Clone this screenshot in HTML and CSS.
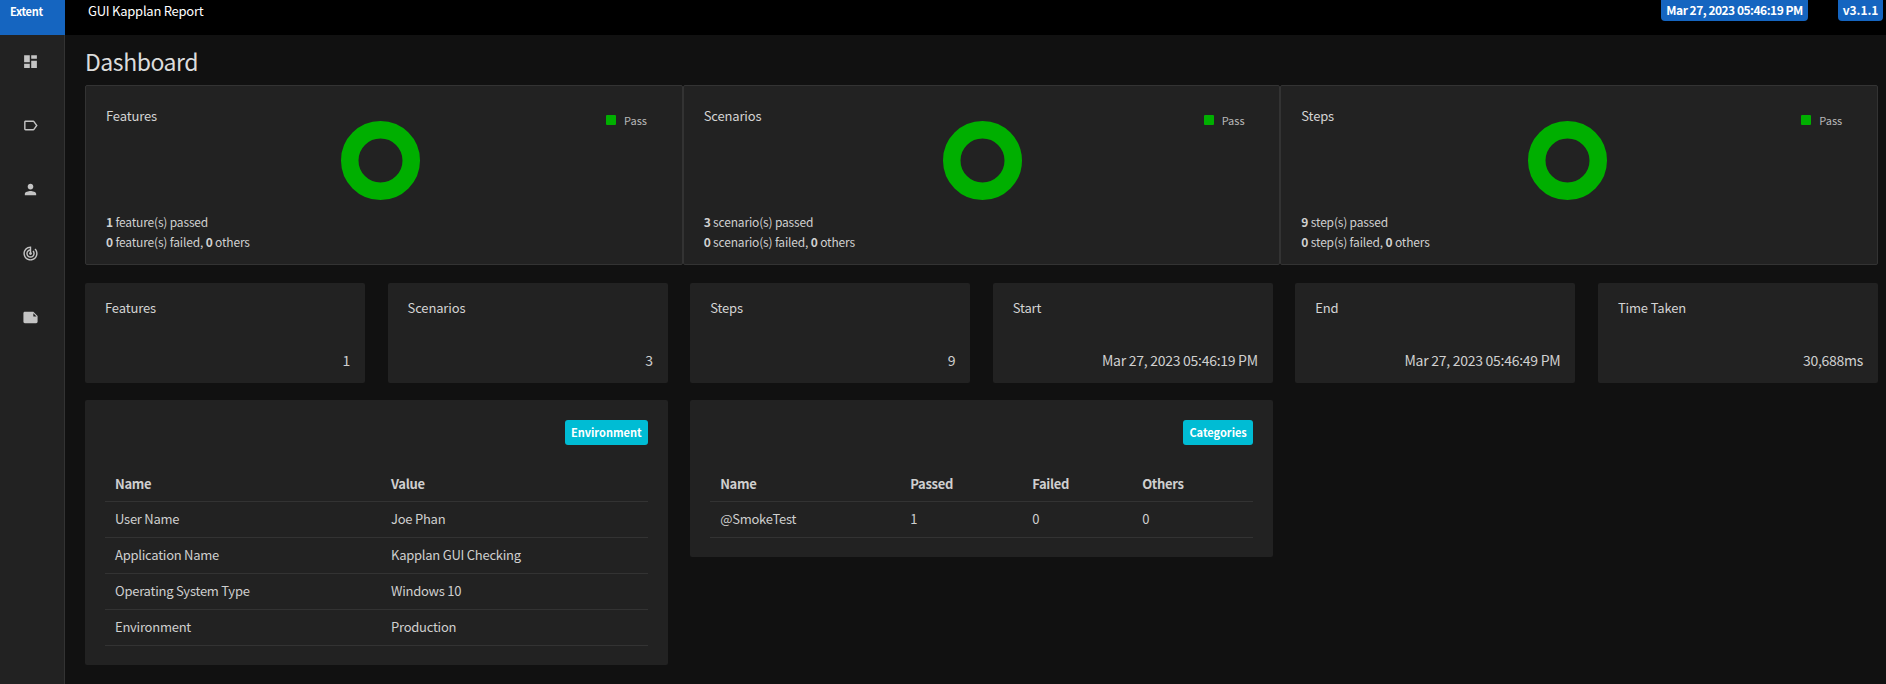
FILE: index.html
```html
<!DOCTYPE html>
<html lang="en">
<head>
<meta charset="utf-8">
<title>GUI Kapplan Report</title>
<link rel="stylesheet" href="styles.css">
</head>
<body>
<header class="navbar">
  <div class="logo">Extent</div>
  <div class="report-name">GUI Kapplan Report</div>
  <div class="nav-badge nav-date">Mar 27, 2023 05:46:19 PM</div>
  <div class="nav-badge nav-version">v3.1.1</div>
</header>
<div class="layout">
  <nav class="sidebar">
    <svg class="side-icon" viewBox="0 0 24 24"><path d="M3 13h8V3H3v10zm0 8h8v-6H3v6zm10 0h8V11h-8v10zm0-19v6h8V3h-8z"/></svg>
    <svg class="side-icon" viewBox="0 0 24 24"><path d="M17.63 5.84C17.27 5.33 16.67 5 16 5L5 5.01C3.9 5.01 3 5.9 3 7v10c0 1.1.9 1.99 2 1.99L16 19c.67 0 1.27-.33 1.63-.84L22 12l-4.37-6.16zM16 17H5V7h11l3.55 5L16 17z"/></svg>
    <svg class="side-icon" viewBox="0 0 24 24"><path d="M12 12c2.21 0 4-1.79 4-4s-1.79-4-4-4-4 1.79-4 4 1.79 4 4 4zm0 2c-2.67 0-8 1.34-8 4v2h16v-2c0-2.66-5.33-4-8-4z"/></svg>
    <svg class="side-icon" viewBox="0 0 24 24"><path d="M19.07 4.93l-1.41 1.41C19.1 7.79 20 9.79 20 12c0 4.42-3.58 8-8 8s-8-3.58-8-8c0-4.08 3.05-7.44 7-7.93v2.02C8.16 6.57 6 9.03 6 12c0 3.31 2.69 6 6 6s6-2.69 6-6c0-1.66-.67-3.16-1.76-4.24l-1.41 1.41C15.55 9.9 16 10.9 16 12c0 2.21-1.79 4-4 4s-4-1.79-4-4c0-1.86 1.28-3.41 3-3.86v2.14c-.6.35-1 .98-1 1.72 0 1.1.9 2 2 2s2-.9 2-2c0-.74-.4-1.38-1-1.72V2h-1C6.48 2 2 6.48 2 12s4.48 10 10 10 10-4.48 10-10c0-2.76-1.12-5.26-2.93-7.07z"/></svg>
    <svg class="side-icon" viewBox="0 0 24 24"><path d="M22 10l-6-6H4c-1.1 0-2 .9-2 2v12.01c0 1.1.9 1.99 2 1.99l16-.01c1.1 0 2-.89 2-1.99v-8zm-6-4l4.5 4.5H16V6z"/></svg>
  </nav>
  <main class="content">
    <h1 class="page-title">Dashboard</h1>
    <section class="charts">
      <article class="chart-card">
        <div class="chart-row">
          <h2 class="chart-title">Features</h2>
          <svg class="donut donut-a" viewBox="0 0 79 79"><circle cx="39.5" cy="39.5" r="30.75" /></svg>
          <div class="legend"><span class="legend-swatch"></span>Pass</div>
        </div>
        <p class="chart-note"><b>1</b> feature(s) passed</p>
        <p class="chart-note"><b>0</b> feature(s) failed, <b>0</b> others</p>
      </article>
      <article class="chart-card">
        <div class="chart-row">
          <h2 class="chart-title">Scenarios</h2>
          <svg class="donut donut-b" viewBox="0 0 79 79"><circle cx="39.5" cy="39.5" r="30.75" /></svg>
          <div class="legend"><span class="legend-swatch"></span>Pass</div>
        </div>
        <p class="chart-note"><b>3</b> scenario(s) passed</p>
        <p class="chart-note"><b>0</b> scenario(s) failed, <b>0</b> others</p>
      </article>
      <article class="chart-card">
        <div class="chart-row">
          <h2 class="chart-title">Steps</h2>
          <svg class="donut donut-c" viewBox="0 0 79 79"><circle cx="39.5" cy="39.5" r="30.75" /></svg>
          <div class="legend"><span class="legend-swatch"></span>Pass</div>
        </div>
        <p class="chart-note"><b>9</b> step(s) passed</p>
        <p class="chart-note"><b>0</b> step(s) failed, <b>0</b> others</p>
      </article>
    </section>
    <section class="grid">
      <article class="stat"><h3 class="stat-title">Features</h3><div class="stat-value">1</div></article>
      <article class="stat"><h3 class="stat-title">Scenarios</h3><div class="stat-value">3</div></article>
      <article class="stat"><h3 class="stat-title">Steps</h3><div class="stat-value">9</div></article>
      <article class="stat"><h3 class="stat-title">Start</h3><div class="stat-value">Mar 27, 2023 05:46:19 PM</div></article>
      <article class="stat"><h3 class="stat-title">End</h3><div class="stat-value">Mar 27, 2023 05:46:49 PM</div></article>
      <article class="stat"><h3 class="stat-title">Time Taken</h3><div class="stat-value">30,688ms</div></article>
      <article class="panel panel-env">
        <div class="panel-head"><span class="panel-badge">Environment</span></div>
        <table class="data-table env-table">
          <thead><tr><th class="env-name">Name</th><th>Value</th></tr></thead>
          <tbody>
            <tr><td>User Name</td><td>Joe Phan</td></tr>
            <tr><td>Application Name</td><td>Kapplan GUI Checking</td></tr>
            <tr><td>Operating System Type</td><td>Windows 10</td></tr>
            <tr><td>Environment</td><td>Production</td></tr>
          </tbody>
        </table>
      </article>
      <article class="panel panel-cat">
        <div class="panel-head"><span class="panel-badge">Categories</span></div>
        <table class="data-table cat-table">
          <thead><tr><th class="cat-name">Name</th><th class="cat-passed">Passed</th><th class="cat-failed">Failed</th><th>Others</th></tr></thead>
          <tbody>
            <tr><td>@SmokeTest</td><td>1</td><td>0</td><td>0</td></tr>
          </tbody>
        </table>
      </article>
    </section>
  </main>
</div>
</body>
</html>
```

FILE: styles.css
```css
* { box-sizing: border-box; }

html, body {
  margin: 0;
  height: 684px;
  overflow: hidden;
}

body {
  background: #111;
  color: #d0d0d0;
  font-family: "Noto Sans CJK JP", "Open Sans", sans-serif;
  font-size: 13px;
}

.navbar {
  display: flex;
  align-items: flex-start;
  height: 35px;
  background: #000;
}

.logo {
  width: 65px;
  height: 35px;
  background: #1565c0;
  color: #fff;
  font-size: 11px;
  font-weight: 700;
  letter-spacing: -0.3px;
  line-height: 22px;
  padding-left: 10px;
}

.report-name {
  flex: 1;
  margin-left: 23px;
  color: #fff;
  font-size: 13px;
  letter-spacing: -0.25px;
  line-height: 21px;
}

.nav-badge {
  height: 21px;
  background: #1565c0;
  color: #fff;
  font-size: 12px;
  font-weight: 700;
  letter-spacing: -0.5px;
  line-height: 20px;
  text-align: center;
  white-space: nowrap;
  border-radius: 0 0 4px 4px;
}

.nav-date { width: 147px; margin-right: 30px; }
.nav-version { width: 45px; margin-right: 3px; letter-spacing: -0.1px; }

.layout {
  display: flex;
  height: 649px;
}

.sidebar {
  display: flex;
  flex-direction: column;
  align-items: center;
  gap: 47px;
  width: 65px;
  padding: 18px 3px 0 0;
  background: #222;
  border-right: 1px solid #333;
}

.side-icon {
  width: 17px;
  height: 17px;
  flex: none;
  fill: #c4c4c4;
}

.content {
  flex: 1;
  min-width: 0;
  padding: 0 8px 0 20px;
}

.page-title {
  margin: 0;
  height: 50px;
  color: #dcdcdc;
  font-size: 23px;
  font-weight: 400;
  letter-spacing: -0.45px;
  line-height: 52px;
}

.charts {
  display: flex;
  height: 180px;
}

.chart-card {
  flex: 1 1 0;
  min-width: 0;
  padding: 20px 20px 0;
  background: #222;
  border: 1px solid #333;
  border-radius: 2px;
}

.chart-row {
  display: flex;
  align-items: flex-start;
  height: 106px;
}

.chart-title {
  width: 0;
  margin: 0;
  color: #d4d4d4;
  font-size: 13px;
  font-weight: 400;
  letter-spacing: -0.15px;
  line-height: 20px;
  white-space: nowrap;
}

.donut {
  flex: none;
  width: 79px;
  height: 79px;
  margin-top: 15px;
  fill: none;
  stroke: #00af00;
  stroke-width: 17.5;
}

.donut-a { margin-left: 235px; }
.donut-b { margin-left: 239px; }
.donut-c { margin-left: 227px; }

.legend {
  display: flex;
  flex: none;
  align-items: center;
  gap: 8px;
  margin-top: 4px;
  color: #b8b8b8;
  font-size: 11px;
  line-height: 20px;
}

.donut-a + .legend { margin-left: 186px; }
.donut-b + .legend { margin-left: 182px; }
.donut-c + .legend { margin-left: 194px; }

.legend-swatch {
  width: 10px;
  height: 10px;
  background: #00af00;
  border-radius: 1px;
}

.chart-note {
  margin: 0;
  font-size: 12px;
  letter-spacing: -0.17px;
  line-height: 20px;
  color: #d0d0d0;
}

.chart-note b { font-weight: 700; }

.grid {
  display: grid;
  grid-template-columns: repeat(6, minmax(0, 1fr));
  column-gap: 22.5px;
  row-gap: 17px;
  align-items: start;
  margin-top: 18px;
}

.stat {
  height: 100px;
  padding: 15px 15px 0 20px;
  background: #222;
  border-radius: 2px;
}

.stat-title {
  margin: 0;
  height: 52px;
  color: #d4d4d4;
  font-size: 13px;
  font-weight: 400;
  letter-spacing: -0.15px;
  line-height: 20px;
}

.stat-value {
  color: #d0d0d0;
  font-size: 14px;
  letter-spacing: -0.27px;
  line-height: 20px;
  text-align: right;
}

.panel {
  grid-column: span 2;
  padding: 20px 20px 0;
  background: #222;
  border-radius: 2px;
}

.panel-env { height: 265px; }
.panel-cat { height: 157px; }

.panel-head {
  display: flex;
  justify-content: flex-end;
  height: 45px;
}

.panel-badge {
  height: 25px;
  padding: 0 6px;
  background: #00bcd4;
  color: #fff;
  font-size: 11px;
  font-weight: 700;
  line-height: 24px;
  border-radius: 3px;
}

.data-table {
  width: 100%;
  table-layout: fixed;
  border-collapse: collapse;
  font-size: 13px;
  letter-spacing: -0.25px;
}

.data-table th,
.data-table td {
  padding: 0 10px;
  height: 36px;
  border-bottom: 1px solid #333;
  color: #cfcfcf;
  text-align: left;
  line-height: 20px;
}

.data-table th {
  height: 36px;
  padding-top: 3px;
  font-weight: 700;
  letter-spacing: -0.3px;
}

.env-name { width: 276px; }
.cat-name { width: 190px; }
.cat-passed { width: 122px; }
.cat-failed { width: 110px; }
```
